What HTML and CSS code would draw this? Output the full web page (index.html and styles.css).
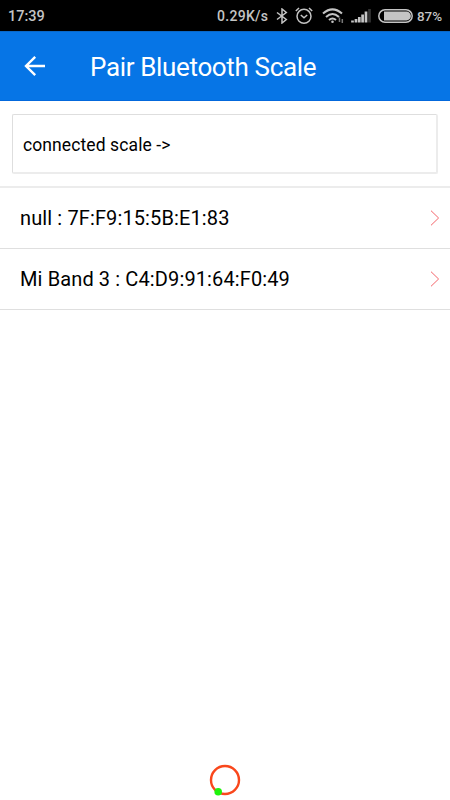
FILE: index.html
```
<!DOCTYPE html>
<html lang="en">
<head>
    <meta charset="UTF-8">
    <title>Pair Bluetooth Scale</title>
    <link rel="stylesheet" href="styles.css">
</head>
<body>
    <div class="status-bar">
        <span class="time">17:39</span>
        <span class="speed">0.29K/s</span>
        <svg class="bluetooth" width="12" height="16" viewBox="0 0 12 16">
            <path d="M1 4.5L10.3 11.5L6 15V1L10.3 4.5L1 11.5"/>
        </svg>
        <svg class="alarm" width="18" height="18" viewBox="0 0 18 18">
            <circle cx="9" cy="9.3" r="7"/>
            <path d="M5.8 8L9 10.8L12.2 8M.8 4L4 1M17.2 4L14 1"/>
        </svg>
        <svg class="wifi" width="22" height="16" viewBox="0 0 22 16">
            <path d="M1 5.6Q10.5 -2.8 20 5.6M4 9Q10.5 3 17 9M7 12Q10.5 9 14 12"/>
            <circle cx="10.5" cy="13.8" r="1.3"/>
            <path class="data" d="M17.5 9.5V14M20.3 11V15"/>
        </svg>
        <svg class="signal" width="20" height="14" viewBox="0 0 20 14">
            <path d="M1.5 11.5V13.5M5 10V13.5M8.3 8V13.5M11.6 5.5V13.5M15 2.5V13.5"/>
            <path class="dim" d="M18.5 0V13.5"/>
        </svg>
        <svg class="battery" width="35" height="14" viewBox="0 0 35 14">
            <rect x=".8" y=".8" width="33.4" height="12.4" rx="6.2"/>
            <path class="level" d="M6 2.6H28.5A4.4 4.4 0 0 1 28.5 11.4H6Z"/>
        </svg>
        <span class="percent">87%</span>
    </div>

    <div class="header">
        <svg class="back" width="22" height="22" viewBox="0 0 22 22">
            <path d="M11.2 1.8L2 11L11.2 20.2M2.2 11H21"/>
        </svg>
        <h1>Pair Bluetooth Scale</h1>
    </div>

    <div class="connected">connected scale -&gt;</div>

    <ul class="devices">
        <li>
            <span>null : 7F:F9:15:5B:E1:83</span>
            <svg class="arrow" width="10" height="16" viewBox="0 0 10 16"><path d="M1 .7L8.6 8L1 15.3"/></svg>
        </li>
        <li>
            <span>Mi Band 3 : C4:D9:91:64:F0:49</span>
            <svg class="arrow" width="10" height="16" viewBox="0 0 10 16"><path d="M1 .7L8.6 8L1 15.3"/></svg>
        </li>
    </ul>

    <svg class="spinner" width="32" height="32" viewBox="0 0 32 32">
        <circle class="ring" cx="16" cy="16" r="14"/>
        <circle class="dot" cx="9.2" cy="27.8" r="3.8"/>
    </svg>
</body>
</html>
```

FILE: styles.css
```
* {
    box-sizing: border-box;
}
body {
    display: flex;
    flex-direction: column;
    height: 100vh;
    margin: 0;
    overflow: hidden;
    background: #fff;
    color: #000;
    font-family: Roboto, sans-serif;
}
svg {
    flex: none;
    fill: none;
}
.status-bar {
    display: flex;
    flex: none;
    align-items: center;
    height: 31px;
    padding: 1px 0 0 8px;
    background: #000;
    color: #c4c4c4;
    font-size: 14px;
    font-weight: 500;
    white-space: nowrap;
}
.status-bar svg {
    stroke: #c4c4c4;
    stroke-width: 1.5;
}
.status-bar .dim {
    stroke: #333;
}
.time {
    width: 209px;
    font-size: 14.5px;
}
.speed {
    width: 59px;
    letter-spacing: 0.3px;
}
.alarm {
    margin-left: 7px;
}
.wifi {
    margin-left: 9px;
}
.status-bar .wifi {
    stroke-width: 2;
}
.wifi circle {
    stroke: none;
    fill: #c4c4c4;
}
.wifi .data {
    stroke: #777;
    stroke-width: 1.5;
}
.signal {
    margin-left: 7px;
}
.status-bar .signal {
    stroke-width: 2.7;
}
.battery {
    margin-left: 7px;
}
.battery .level {
    stroke: none;
    fill: #c4c4c4;
}
.percent {
    margin-left: 4px;
    font-size: 13.4px;
}
.header {
    display: flex;
    flex: none;
    align-items: center;
    height: 70px;
    padding-left: 24px;
    background: #0675e6;
    border-top: 1px solid #0968c8;
    border-bottom: 1px solid #0368dc;
}
.back {
    stroke: #fff;
    stroke-width: 2.4;
}
h1 {
    margin: 2px 0 0 44px;
    color: #fff;
    font-size: 26px;
    font-weight: 400;
    letter-spacing: -0.35px;
}
.connected {
    flex: none;
    height: 60px;
    margin: 13px 12px 12px;
    padding-left: 10px;
    border: 2px solid #ececec;
    border-top: 1px solid #dedede;
    border-left: 1px solid #dedede;
    border-radius: 2px;
    font-size: 17.5px;
    line-height: 60px;
    letter-spacing: 0.1px;
}
.devices {
    flex: 1;
    margin: 0;
    padding: 0;
    border-top: 2px solid #ececec;
    list-style: none;
}
.devices li {
    display: flex;
    align-items: center;
    justify-content: space-between;
    height: 61px;
    padding: 0 10px 0 20px;
    border-bottom: 1px solid #dfdfdf;
    font-size: 20px;
    letter-spacing: 0.12px;
}
.arrow {
    stroke: #f4656b;
    stroke-width: 1;
}
.spinner {
    margin: 0 0 4px 209px;
}
.ring {
    stroke: #f9471c;
    stroke-width: 2.4;
}
.dot {
    fill: #1ff30c;
}
```
